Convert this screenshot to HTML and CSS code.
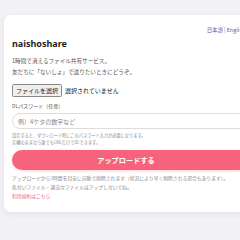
FILE: index.html
```html
<!DOCTYPE html>
<html lang="ja">
<head>
<meta charset="utf-8">
<title>naishoshare</title>
<link rel="stylesheet" href="styles.css">
</head>
<body>
<main class="card">
  <div class="lang"><a href="#">日本語</a> | <a href="#">English</a></div>
  <h1 class="title">naishoshare</h1>
  <p class="desc">1時間で消えるファイル共有サービス。<br>友だちに「ないしょ」で送りたいときにどうぞ。</p>
  <div class="file-row">
    <button class="file-btn" type="button">ファイルを選択</button>
    <span class="file-name">選択されていません</span>
  </div>
  <label class="label">DLパスワード（任意）</label>
  <div class="input"><span class="placeholder">例）4ケタの数字など</span></div>
  <p class="help">設定すると、ダウンロード時にこのパスワード入力が必要になります。<br>空欄のままなら誰でもURLだけでDLできます。</p>
  <button class="upload" type="button">アップロードする</button>
  <p class="notes">アップロードから1時間を目安に自動で削除されます（状況により早く削除される場合もあります）。<br>危ないファイル・違法なファイルはアップしないでね。<br><a href="#" class="terms">利用規約はこちら</a></p>
</main>
</body>
</html>
```
FILE: styles.css
```css
html, body {
  margin: 0;
  padding: 0;
  overflow: hidden;
}
body {
  background: #f2f1f6;
  width: 240px;
  height: 240px;
  padding: 15px 0 0 4px;
  box-sizing: border-box;
  font-family: "Noto Sans CJK JP", "Noto Sans", sans-serif;
  color: #333;
}
.card {
  width: 252px;
  background: #fff;
  border-radius: 7px;
  box-shadow: 0 2px 6px rgba(60, 50, 90, 0.08);
  padding: 12px 8px 12.5px 8px;
  box-sizing: border-box;
  display: flex;
  flex-direction: column;
}
.lang {
  text-align: right;
  font-size: 5.4px;
  line-height: 6px;
  color: #7a6cae;
  margin-right: 3px;
}
.lang a {
  color: #6a5aa8;
  text-decoration: none;
}
.title {
  margin: 5px 0 0;
  font-size: 9px;
  line-height: 12px;
  font-weight: 700;
  color: #1e1e24;
  font-family: "Noto Sans", "Noto Sans CJK JP", sans-serif;
}
.desc {
  margin: 5.5px 0 0;
  font-size: 5.6px;
  line-height: 11px;
  color: #555;
}
.file-row {
  margin-top: 6.5px;
  height: 13px;
  display: flex;
  align-items: center;
  gap: 3px;
}
.file-btn {
  height: 13px;
  padding: 0 3px;
  margin: 0;
  font-family: inherit;
  font-size: 6px;
  line-height: 11px;
  background: #efefef;
  border: 0.8px solid #8a8a8a;
  border-radius: 1.5px;
  color: #222;
}
.file-name {
  font-size: 6px;
  color: #222;
}
.label {
  margin-top: 5px;
  font-size: 5px;
  line-height: 8px;
  color: #555;
}
.input {
  margin-top: 3px;
  height: 16px;
  border: 0.8px solid #ddd;
  border-radius: 8px;
  box-sizing: border-box;
  display: flex;
  align-items: center;
  padding-left: 5px;
}
.placeholder {
  font-size: 6px;
  color: #888;
}
.help {
  margin: 2.5px 0 0;
  font-size: 4.2px;
  line-height: 7px;
  color: #8c8c8c;
}
.upload {
  margin-top: 4.5px;
  height: 20px;
  border: none;
  border-radius: 10px;
  background: #f7637c;
  color: #fff;
  font-family: inherit;
  font-size: 7.2px;
  font-weight: 700;
  box-shadow: 0 1px 3px rgba(247, 99, 124, 0.3);
  text-align: center;
  padding: 0 8px 0 0;
}
.notes {
  margin: 2.5px 0 0;
  font-size: 4.8px;
  line-height: 9px;
  color: #888;
}
.terms {
  color: #e8687f;
  text-decoration: none;
}
```
